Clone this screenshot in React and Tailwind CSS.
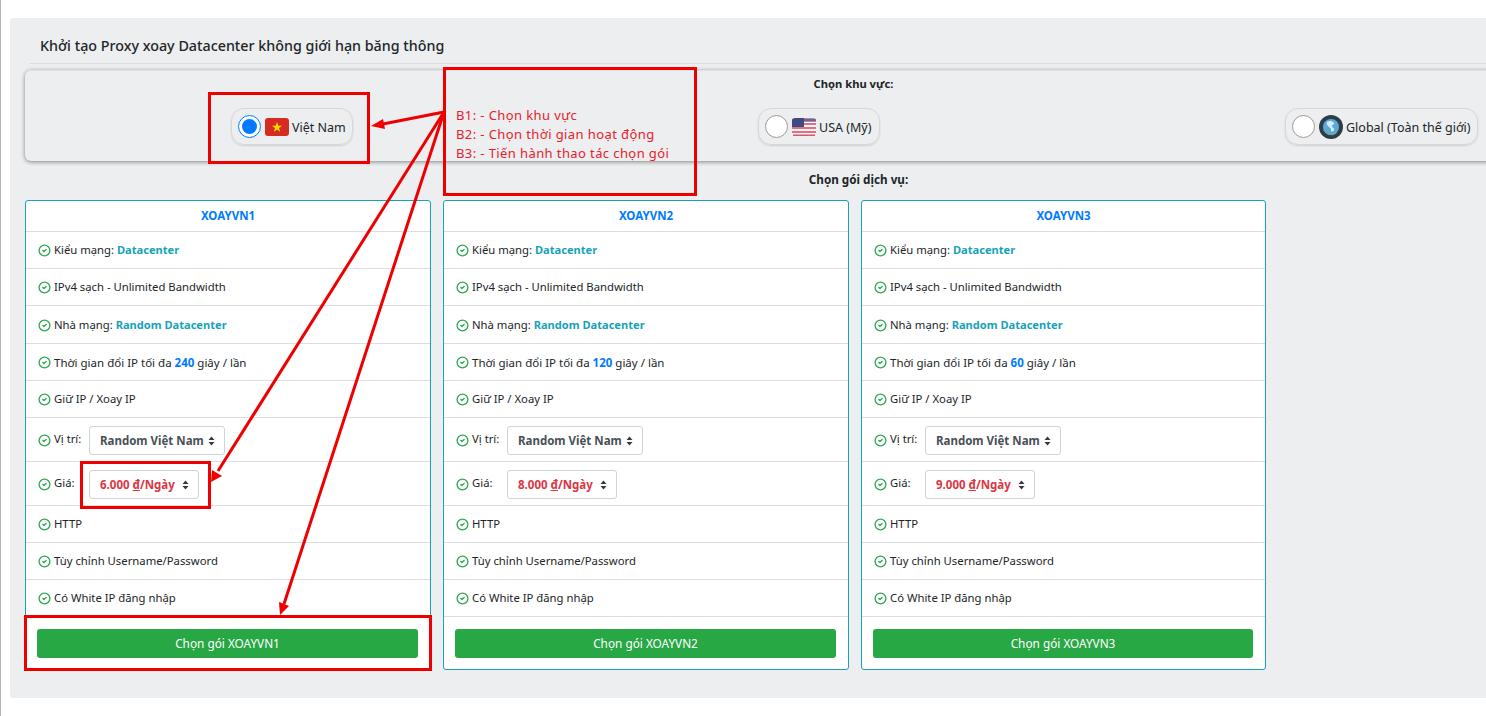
import React from "react";
import { CircleCheck } from "lucide-react";

const plans = [
  { name: "XOAYVN1", seconds: 240, price: "6.000" },
  { name: "XOAYVN2", seconds: 120, price: "8.000" },
  { name: "XOAYVN3", seconds: 60, price: "9.000" },
];

function Check() {
  return <CircleCheck className="w-[13px] h-[13px] text-[#2fa651] shrink-0 mr-[3px]" strokeWidth={2.4} />;
}

function UpDown() {
  return (
    <svg width="7" height="10" viewBox="0 0 7 10" className="shrink-0 mt-[1px]">
      <path d="M3.5 0.5 L6.5 4 H0.5 Z M3.5 9.5 L0.5 6 H6.5 Z" fill="#343a40" />
    </svg>
  );
}

function Row({ className = "h-[37px]", children }) {
  return (
    <div className={`flex items-center pl-[12px] pt-[1px] border-b border-[#dcdfe2] ${className}`}>
      {children}
    </div>
  );
}

function Select({ className, children }) {
  return (
    <div className={`flex items-center justify-between h-[29px] bg-white border border-[#ced4da] rounded-[3px] pl-[10px] pr-[9px] text-[11.5px] font-bold whitespace-nowrap ${className}`}>
      <span className="mt-[2px]">{children}</span>
      <UpDown />
    </div>
  );
}

function PlanCard({ plan }) {
  return (
    <div className="w-[406px] last:w-[405px] h-[470px] bg-white border border-[#17a2b8] rounded-[3px] text-[11.3px] text-[#212529] flex flex-col">
      <div className="h-[31px] flex items-center justify-center border-b border-[#dcdfe2] text-[11.5px] font-bold text-[#007bff]">
        {plan.name}
      </div>
      <Row><Check /><span>Kiểu mạng: <b className="text-[11.1px] text-[#17a2b8]">Datacenter</b></span></Row>
      <Row><Check /><span>IPv4 sạch - Unlimited Bandwidth</span></Row>
      <Row className="h-[38px]"><Check /><span>Nhà mạng: <b className="text-[11.1px] text-[#17a2b8]">Random Datacenter</b></span></Row>
      <Row><Check /><span className="text-[11.5px]">Thời gian đổi IP tối đa <b className="text-[#007bff]">{plan.seconds}</b> giây / lần</span></Row>
      <Row><Check /><span>Giữ IP / Xoay IP</span></Row>
      <Row className="h-[44px]">
        <Check /><span className="w-[35px] -mt-[2px]">Vị trí:</span>
        <Select className="w-[136px] text-[#495057]">Random Việt Nam</Select>
      </Row>
      <Row className="h-[44px]">
        <Check /><span className="w-[35px] -mt-[2px]">Giá:</span>
        <Select className="w-[110px] text-[#dc3545]">{plan.price} <u>đ</u>/Ngày</Select>
      </Row>
      <Row><Check /><span>HTTP</span></Row>
      <Row><Check /><span>Tùy chỉnh Username/Password</span></Row>
      <Row><Check /><span>Có White IP đăng nhập</span></Row>
      <div className="flex-1 pl-[11px] pr-[12px] pt-[12px]">
        <button className="w-full h-[29px] bg-[#28a745] rounded-[3px] text-white text-[11.8px]">
          Chọn gói {plan.name}
        </button>
      </div>
    </div>
  );
}

function VnFlag() {
  return (
    <svg width="24" height="18" viewBox="0 0 24 18" className="shrink-0">
      <rect width="24" height="18" rx="3" fill="#d62b20" />
      <path d="M12 4 L13.3 7.7 L17 7.7 L14 10 L15.1 13.7 L12 11.5 L8.9 13.7 L10 10 L7 7.7 L10.7 7.7 Z" fill="#ffde00" />
    </svg>
  );
}

function UsFlag() {
  return (
    <svg width="24" height="18" viewBox="0 0 24 18" className="shrink-0">
      <rect width="24" height="18" rx="3" fill="#f4f4f6" />
      <path d="M0 2h24M0 6h24M0 10h24M0 14h24" stroke="#d8475a" strokeWidth="1.6" />
      <path d="M1 17.2h22" stroke="#d8475a" strokeWidth="1.4" />
      <path d="M3 0h9v9H0V3a3 3 0 0 1 3-3z" fill="#3f4a80" />
      <path d="M12 0h9a3 3 0 0 1 3 3v1H12zM0 5h12v4H0z" fill="#3f4a80" opacity="0.55" />
    </svg>
  );
}

function Globe() {
  return (
    <svg width="24" height="24" viewBox="0 0 24 24" className="shrink-0">
      <circle cx="12" cy="12" r="12" fill="#2f3d46" />
      <circle cx="12" cy="12" r="8" fill="#5aa9dc" />
      <path d="M8 7c3-2 6-1 7 1s-2 1-2 3 3 2 2 4-3 2-3 0-1-2-2-3-3-3-2-5z" fill="#dcecf6" />
      <path d="M4.5 15a8.5 8.5 0 0 0 13 3" fill="none" stroke="#7f9f7a" strokeWidth="1" />
    </svg>
  );
}

function RegionOption({ checked, flag, label, className }) {
  return (
    <div className={`flex items-center h-[37px] pl-[6px] border border-[#d5d7d9] rounded-[13px] shadow-[0_1px_2px_rgba(0,0,0,0.12)] text-[12.5px] text-[#212529] ${className}`}>
      {checked ? (
        <span className="w-[23px] h-[23px] rounded-full bg-white border border-[#007bff] flex items-center justify-center shrink-0 mr-[4px]">
          <span className="w-[15px] h-[15px] rounded-full bg-[#007bff]" />
        </span>
      ) : (
        <span className="w-[23px] h-[23px] rounded-full bg-white border border-[#9a9a9a] shrink-0 mr-[4px]" />
      )}
      {flag}
      <span className="ml-[3px] mt-[3px] whitespace-nowrap">{label}</span>
    </div>
  );
}

// red notes drawn over the screenshot
function Annotations() {
  return (
    <>
      <div className="absolute left-[208px] top-[92px] w-[162px] h-[72px] border-[3px] border-[#ee0000]" />
      <div className="absolute left-[443px] top-[67px] w-[254px] h-[129px] border-[3px] border-[#ee0000] pl-[10px] pt-[36px] text-[13px] leading-[19px] tracking-[0.4px] text-[#e8212b]">
        <div>B1: - Chọn khu vực</div>
        <div>B2: - Chọn thời gian hoạt động</div>
        <div>B3: - Tiến hành thao tác chọn gói</div>
      </div>
      <div className="absolute left-[80px] top-[461px] w-[131px] h-[48px] border-[3px] border-[#ee0000]" />
      <div className="absolute left-[24px] top-[615px] w-[408px] h-[56px] border-[3px] border-[#ee0000]" />
      <svg className="absolute left-0 top-0" width="1486" height="716" fill="none">
        <g stroke="#ee0000" strokeWidth="3">
          <path d="M444 112 L383 124" />
          <path d="M444 112 L218 471" />
          <path d="M444 112 L284 604" />
        </g>
        <g fill="#ee0000">
          <path d="M371 126 L383 119 L385 129 Z" />
          <path d="M211 482 L212 470 L222 476 Z" />
          <path d="M280 615 L279 602 L289 606 Z" />
        </g>
      </svg>
    </>
  );
}

export default function App() {
  return (
    <div className="relative w-[1486px] h-[716px] overflow-hidden bg-white font-['Noto_Sans',sans-serif]">
      <div className="absolute left-0 top-0 bottom-0 w-[1px] bg-[#b5b5b5]" />

      <div className="absolute left-[10px] top-[18px] w-[1700px] h-[680px] bg-[#eceef0] rounded-[3px] pt-[19px]">
        <h1 className="ml-[30px] text-[14.3px] leading-[18px] font-medium text-[#212529]">
          Khởi tạo Proxy xoay Datacenter không giới hạn băng thông
        </h1>
        <div className="ml-[20px] mt-[8px] border-t border-[#dadcdf]" />

        <div className="ml-[15px] mt-[6px] w-[1657px] h-[91px] rounded-[6px] bg-[#eceef0] shadow-[0_1px_4px_rgba(0,0,0,0.45)] border-t border-[#dfe1e3] pt-[6px]">
          <p className="text-center text-[11.2px] leading-[14px] font-bold text-[#212529]">Chọn khu vực:</p>
          <div className="mt-[17px] pl-[206px] flex gap-[405px]">
            <RegionOption checked flag={<VnFlag />} label="Việt Nam" className="w-[122px]" />
            <RegionOption flag={<UsFlag />} label="USA (Mỹ)" className="w-[122px]" />
            <RegionOption flag={<Globe />} label="Global (Toàn thế giới)" className="w-[193px]" />
          </div>
        </div>

        <p className="mt-[11px] ml-[15px] w-[1667px] text-center text-[11.7px] leading-[14px] font-bold text-[#212529]">
          Chọn gói dịch vụ:
        </p>

        <div className="ml-[15px] mt-[14px] flex gap-[12px]">
          {plans.map((plan) => (
            <PlanCard key={plan.name} plan={plan} />
          ))}
        </div>
      </div>

      <Annotations />
    </div>
  );
}
